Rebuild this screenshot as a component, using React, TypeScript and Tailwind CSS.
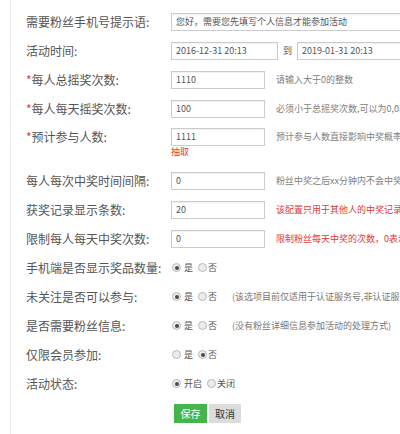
import type { ReactNode } from "react";

const font = "font-['Noto_Sans_CJK_SC','Noto_Sans',sans-serif]";

function Label({ children, required }: { children: ReactNode; required?: boolean }) {
  return (
    <div className="w-[145px] shrink-0 text-[12px] leading-none text-[#555]">
      {required && <span className="text-[#e2383a]">*</span>}
      {children}
    </div>
  );
}

function Field({ value, w }: { value: string; w: string }) {
  return (
    <div
      className={`${w} h-[18px] shrink-0 flex items-center px-[4px] border border-[#ccc] bg-white shadow-[inset_0_1px_1px_rgba(0,0,0,0.06)] text-[9px] text-[#555] whitespace-nowrap overflow-hidden`}
    >
      {value}
    </div>
  );
}

function Hint({ children, red }: { children: ReactNode; red?: boolean }) {
  return (
    <span
      className={`ml-[11px] text-[9px] whitespace-nowrap ${red ? "text-[#e2383a]" : "text-[#808080]"}`}
    >
      {children}
    </span>
  );
}

function Radio({ checked }: { checked?: boolean }) {
  return (
    <span className="w-[9px] h-[9px] shrink-0 rounded-full border border-[#b8b8b8] bg-[#ececec] flex items-center justify-center">
      {checked && <span className="w-[4px] h-[4px] rounded-full bg-[#4a4a4a]" />}
    </span>
  );
}

function RadioGroup({ options, selected }: { options: string[]; selected: number }) {
  return (
    <div className="flex items-center pl-[1px] text-[9px] text-[#555]">
      {options.map((o, i) => (
        <span key={o} className={`flex items-center ${i > 0 ? "ml-[5px]" : ""}`}>
          <Radio checked={i === selected} />
          <span className={`${i === 0 ? "ml-[3px]" : "ml-[1px]"}`}>{o}</span>
        </span>
      ))}
    </div>
  );
}

function Row({ children }: { children: ReactNode }) {
  return <div className="h-[29px] flex items-center">{children}</div>;
}

export default function App() {
  return (
    <div className={`w-[400px] h-[434px] overflow-hidden bg-white ${font}`}>
      <div className="ml-[10px] h-full border-l border-[#ececec] pl-[15px] pt-[7px]">
        <Row>
          <Label>需要粉丝手机号提示语:</Label>
          <Field w="w-[260px]" value="您好，需要您先填写个人信息才能参加活动" />
        </Row>
        <Row>
          <Label>活动时间:</Label>
          <Field w="w-[107px]" value="2016-12-31 20:13" />
          <span className="mx-[5px] text-[9px] text-[#555]">到</span>
          <Field w="w-[107px]" value="2019-01-31 20:13" />
        </Row>
        <Row>
          <Label required>每人总摇奖次数:</Label>
          <Field w="w-[94px]" value="1110" />
          <Hint>请输入大于0的整数</Hint>
        </Row>
        <Row>
          <Label required>每人每天摇奖次数:</Label>
          <Field w="w-[94px]" value="100" />
          <Hint>必须小于总摇奖次数,可以为0,0表示不限制</Hint>
        </Row>
        <div className="flex pt-[5px] pb-[8px]">
          <div className="h-[18px] flex items-center">
            <Label required>预计参与人数:</Label>
          </div>
          <div className="flex flex-col">
            <div className="h-[18px] flex items-center">
              <Field w="w-[94px]" value="1111" />
              <Hint>预计参与人数直接影响中奖概率，请谨慎填写</Hint>
            </div>
            <span className="text-[9px] leading-[12px] text-[#e2383a]">抽取</span>
          </div>
        </div>
        <Row>
          <Label>每人每次中奖时间间隔:</Label>
          <Field w="w-[94px]" value="0" />
          <Hint>粉丝中奖之后xx分钟内不会中奖，0表示不限制</Hint>
        </Row>
        <Row>
          <Label>获奖记录显示条数:</Label>
          <Field w="w-[94px]" value="20" />
          <Hint red>该配置只用于其他人的中奖记录显示条数</Hint>
        </Row>
        <Row>
          <Label>限制每人每天中奖次数:</Label>
          <Field w="w-[94px]" value="0" />
          <Hint red>限制粉丝每天中奖的次数，0表示不限制</Hint>
        </Row>
        <Row>
          <Label>手机端是否显示奖品数量:</Label>
          <RadioGroup options={["是", "否"]} selected={0} />
        </Row>
        <Row>
          <Label>未关注是否可以参与:</Label>
          <RadioGroup options={["是", "否"]} selected={0} />
          <span className="ml-[15px] text-[9px] text-[#777] whitespace-nowrap">
            (该选项目前仅适用于认证服务号,非认证服务号请选择是)
          </span>
        </Row>
        <Row>
          <Label>是否需要粉丝信息:</Label>
          <RadioGroup options={["是", "否"]} selected={0} />
          <span className="ml-[15px] text-[9px] text-[#777] whitespace-nowrap">
            (没有粉丝详细信息参加活动的处理方式)
          </span>
        </Row>
        <Row>
          <Label>仅限会员参加:</Label>
          <RadioGroup options={["是", "否"]} selected={1} />
        </Row>
        <Row>
          <Label>活动状态:</Label>
          <RadioGroup options={["开启", "关闭"]} selected={0} />
        </Row>
        <div className="flex mt-[6px] pl-[148px] gap-[2px]">
          <button className="w-[33px] h-[19px] flex items-center justify-center bg-[#44b549] text-white text-[10px]">
            保存
          </button>
          <button className="w-[32px] h-[19px] flex items-center justify-center bg-[#dcdcdc] text-[#333] text-[10px]">
            取消
          </button>
        </div>
      </div>
    </div>
  );
}
